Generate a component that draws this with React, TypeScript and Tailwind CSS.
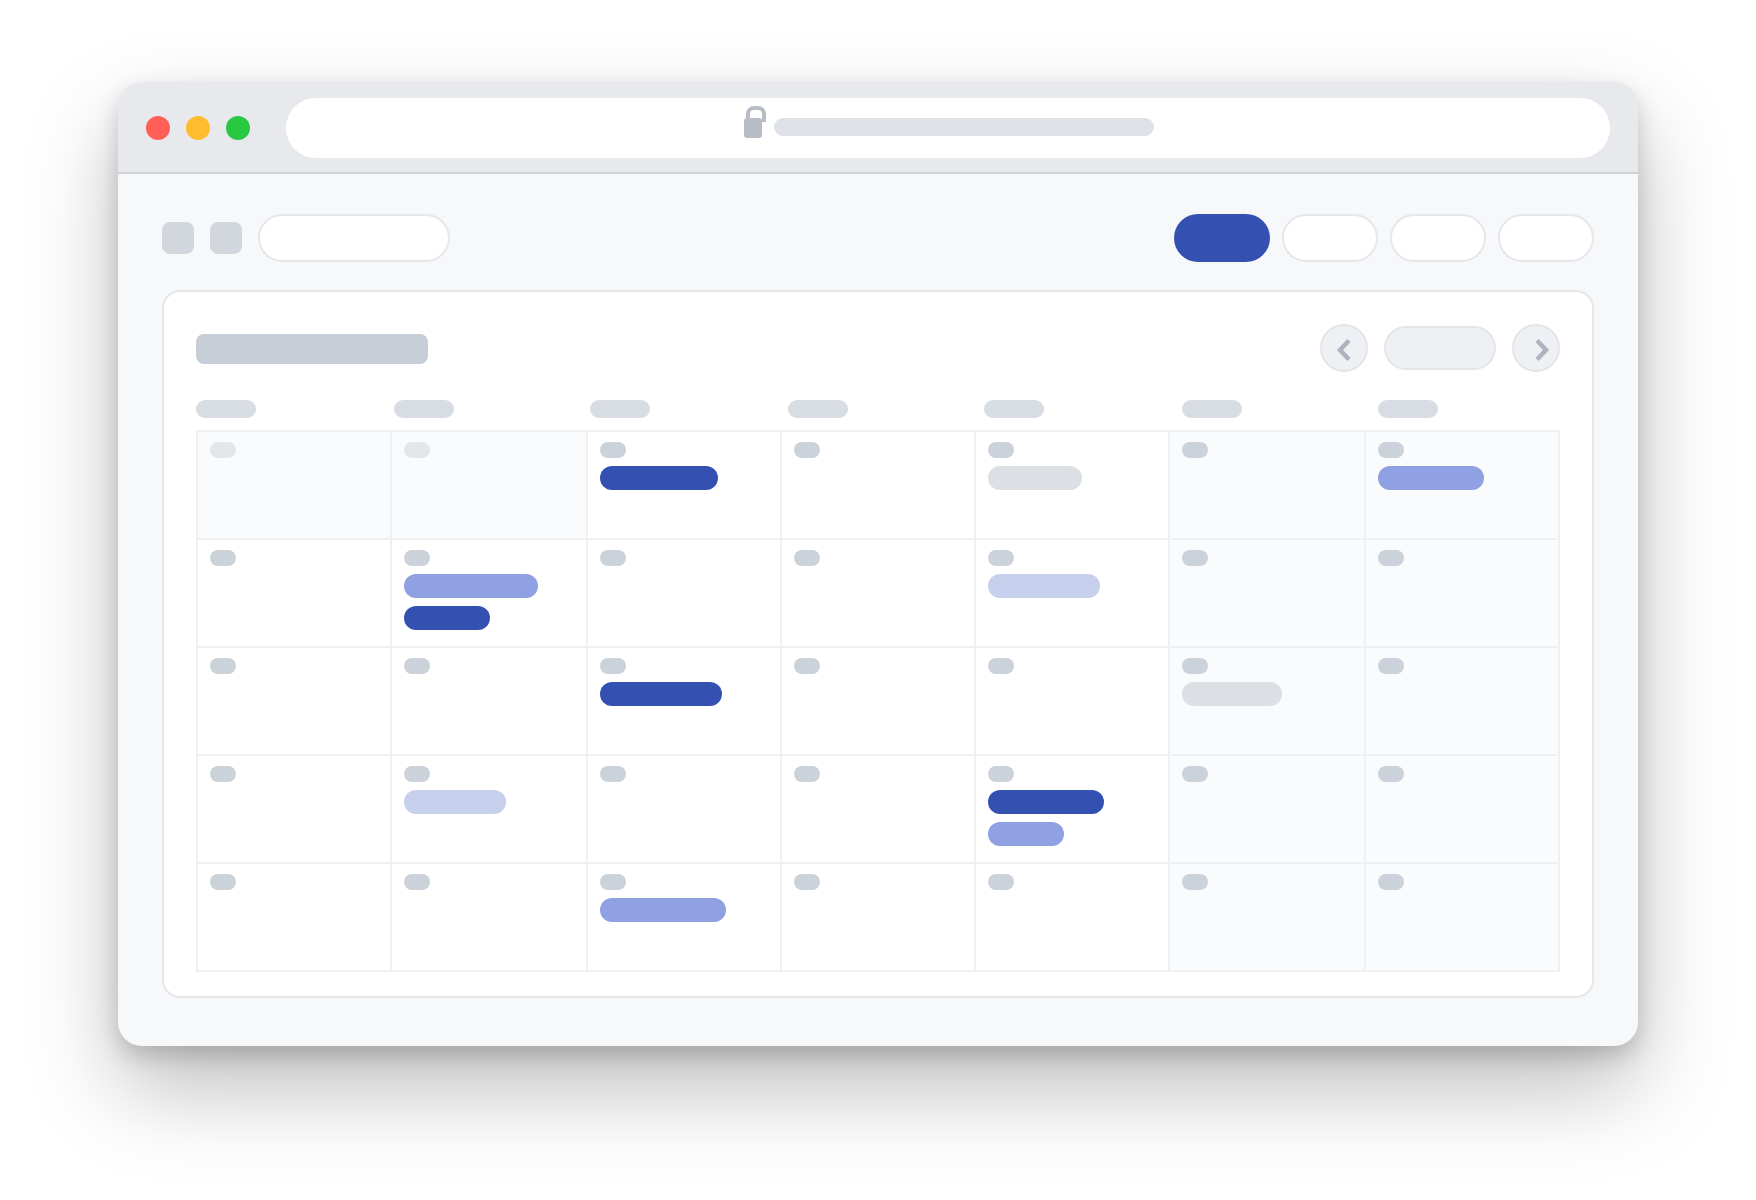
const dayOffsets = ['a', 'b', 'c', 'd', 'e', 'f', 'g'];

const BLUE = 'bg-[#3451b2]';
const PERI = 'bg-[#8fa0e3]';
const LIGHT = 'bg-[#c6cfec]';
const GRAY = 'bg-[#dce0e5]';

type Ev = { w: number; color: string };

// rows of 7 cells, each with its event bars
const rows: Ev[][][] = [
    [[], [], [{ w: 118, color: BLUE }], [], [{ w: 94, color: GRAY }], [], [{ w: 106, color: PERI }]],
    [[], [{ w: 134, color: PERI }, { w: 86, color: BLUE }], [], [], [{ w: 112, color: LIGHT }], [], []],
    [[], [], [{ w: 122, color: BLUE }], [], [], [{ w: 100, color: GRAY }], []],
    [[], [{ w: 102, color: LIGHT }], [], [], [{ w: 116, color: BLUE }, { w: 76, color: PERI }], [], []],
    [[], [], [{ w: 126, color: PERI }], [], [], [], []],
];

const Chevron = ({ points }: { points: string }) => (
    <svg width="44" height="44" viewBox="0 0 44 44" fill="none">
        <polyline points={points} stroke="#aeb3bf" strokeWidth="4.5" />
    </svg>
);

const Lock = () => (
    <svg width="22" height="32" viewBox="0 0 22 32" fill="none" className="mt-2 ml-[2px] shrink-0">
        <path d="M4 14V8a6 6 0 0 1 6-6h4a6 6 0 0 1 6 6v8" stroke="#b8bcc6" strokeWidth="4" />
        <rect x="0" y="12" width="18" height="20" rx="3" fill="#b8bcc6" />
    </svg>
);

const Cell = ({ events, muted, faded }: { events: Ev[]; muted: boolean; faded: boolean }) => (
    <div className={`h-[108px] border-r-2 border-b-2 border-[#eef0f4] pt-[10px] pl-3 flex flex-col items-start gap-2 ${muted ? 'bg-[#fafbfd]' : 'bg-white'}`}>
        <div className={`w-[26px] h-4 rounded-lg ${faded ? 'bg-[#e3e6ea]' : 'bg-[#cbd2da]'}`} />
        {events.map((ev, i) => (
            <div key={i} className={`h-6 rounded-xl ${ev.color}`} style={{ width: ev.w }} />
        ))}
    </div>
);

export default function App() {
    return (
        <div className="min-h-screen bg-white pt-[82px] flex justify-center">
            <div className="w-[1520px] h-[964px] rounded-3xl bg-[#f7f8fa] overflow-hidden shadow-[0_42px_90px_rgba(0,0,0,0.26),0_10px_22px_rgba(0,0,0,0.17)]">
                {/* title bar */}
                <div className="h-[92px] bg-[#e8e9ed] border-b-2 border-[#cfd1d8] flex items-start pt-4 px-7">
                    <div className="flex gap-4 mt-[18px] mr-9">
                        <div className="w-6 h-6 rounded-full bg-[#ff5f57]" />
                        <div className="w-6 h-6 rounded-full bg-[#febc2e]" />
                        <div className="w-6 h-6 rounded-full bg-[#28c840]" />
                    </div>
                    <div className="flex-1 h-[60px] rounded-[30px] bg-white flex justify-center items-start gap-2">
                        <Lock />
                        <div className="w-[380px] h-[18px] mt-5 rounded-[9px] bg-[#dfe2e7]" />
                    </div>
                </div>

                <div className="px-11 pt-10">
                    {/* toolbar */}
                    <div className="flex items-center justify-between">
                        <div className="flex items-center">
                            <div className="w-8 h-8 rounded-lg bg-[#d2d7de]" />
                            <div className="w-8 h-8 rounded-lg bg-[#d2d7de] ml-4" />
                            <div className="w-48 h-12 rounded-3xl bg-white border-2 border-[#e5e7eb] ml-4" />
                        </div>
                        <div className="flex gap-3">
                            <div className="w-24 h-12 rounded-3xl bg-[#3451b2]" />
                            <div className="w-24 h-12 rounded-3xl bg-white border-2 border-[#e5e7eb]" />
                            <div className="w-24 h-12 rounded-3xl bg-white border-2 border-[#e5e7eb]" />
                            <div className="w-24 h-12 rounded-3xl bg-white border-2 border-[#e5e7eb]" />
                        </div>
                    </div>

                    {/* calendar card */}
                    <div className="mt-7 h-[708px] rounded-[18px] bg-white border-2 border-[#e5e7eb] px-8 pt-8">
                        <div className="flex items-center justify-between h-12">
                            <div className="w-[232px] h-[30px] mt-0.5 rounded-lg bg-[#c8ced8]" />
                            <div className="flex items-center gap-4">
                                <div className="w-12 h-12 rounded-full bg-[#eff0f4] border-2 border-[#e2e5ea]">
                                    <Chevron points="27,14.5 18,24 27,33.5" />
                                </div>
                                <div className="w-28 h-11 rounded-3xl bg-[#eff0f4] border-2 border-[#e2e5ea]" />
                                <div className="w-12 h-12 rounded-full bg-[#eff0f4] border-2 border-[#e2e5ea]">
                                    <Chevron points="23,14.5 32,24 23,33.5" />
                                </div>
                            </div>
                        </div>

                        {/* weekday labels */}
                        <div className="grid grid-cols-[198px_196px_198px_196px_198px_196px_1fr] mt-7">
                            {dayOffsets.map((d) => (
                                <div key={d} className="w-[60px] h-[18px] rounded-[9px] bg-[#d8dce3]" />
                            ))}
                        </div>

                        {/* month grid */}
                        <div className="grid grid-cols-[194px_196px_194px_194px_194px_196px_194px] mt-3 border-t-2 border-l-2 border-[#eef0f4] w-[1364px]">
                            {rows.map((row, r) =>
                                row.map((events, c) => (
                                    <Cell
                                        key={`${r}-${c}`}
                                        events={events}
                                        muted={c >= 5 || (r === 0 && c < 2)}
                                        faded={r === 0 && c < 2}
                                    />
                                ))
                            )}
                        </div>
                    </div>
                </div>
            </div>
        </div>
    );
}
